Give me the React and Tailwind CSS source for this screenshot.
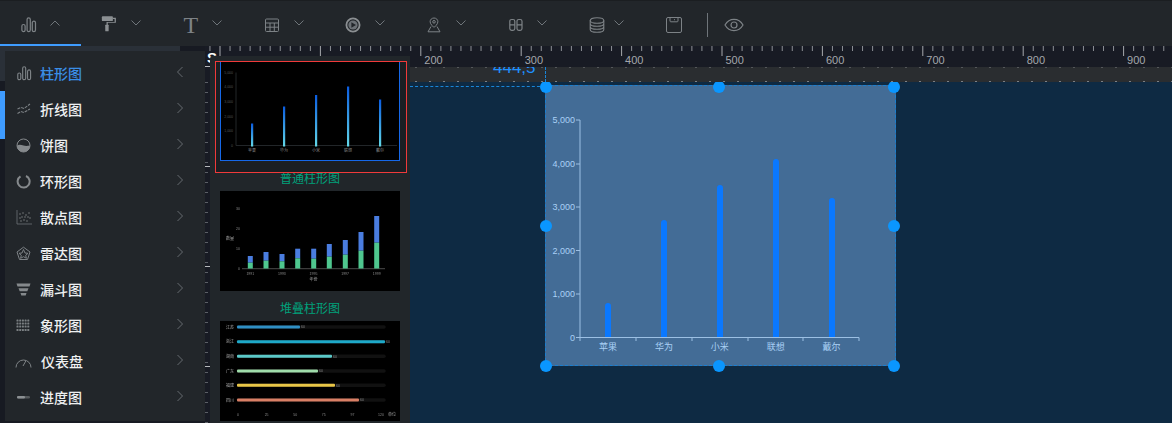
import React from "react";

const CJK = { fontFamily: '"Noto Sans CJK SC", "Liberation Sans", sans-serif' };
const G = "#7d8286";

const Ico = ({ size = 24, vb = 24, children, sw = 1.3, className = "" }) => (
  <svg width={size} height={size} viewBox={`0 0 ${vb} ${vb}`} fill="none" stroke={G} strokeWidth={sw} className={className}>
    {children}
  </svg>
);

const Chev = ({ up }) => (
  <svg width="12" height="8" viewBox="0 0 12 8" fill="none" stroke="#6f757a" strokeWidth="1" className="-mt-[4px]">
    <path d={up ? "M1.5 6.5 6 2l4.5 4.5" : "M1.5 1.5 6 6l4.5-4.5"} />
  </svg>
);

const BarsIco = ({ size = 18 }) => (
  <Ico size={size} vb={18}>
    <rect x="2" y="9" width="3.4" height="7.5" rx="1.7" />
    <rect x="7.5" y="2" width="3.4" height="14.5" rx="1.7" />
    <rect x="13" y="5.5" width="3.4" height="11" rx="1.7" />
  </Ico>
);

const ToolIcons = {
  bars: <BarsIco size={17} />,
  roller: (
    <svg width="20" height="20" viewBox="0 0 20 20" fill="#8b8f92" className="-mt-[2px]">
      <rect x="1" y="1" width="13" height="5.5" rx="1" />
      <path d="M14 2.5h3.5v6H8v3H6.5V7.5h9.5V4H14z" />
      <rect x="5" y="11" width="4" height="7.5" rx="0.6" />
    </svg>
  ),
  text: (
    <span className="text-[24px] leading-none text-[#7d8286]" style={{ fontFamily: '"Liberation Serif", serif' }}>T</span>
  ),
  table: (
    <Ico size={16} vb={16} sw={1}>
      <rect x="1.5" y="2" width="13" height="12.5" rx="1" />
      <path d="M1.5 6h13M1.5 10.2h13M6 6v8.5M10.3 6v8.5" />
    </Ico>
  ),
  play: (
    <svg width="16" height="16" viewBox="0 0 16 16">
      <circle cx="8" cy="8" r="6.6" fill="none" stroke="#8b8f92" strokeWidth="1.8" />
      <circle cx="8" cy="8" r="4.6" fill="#6c7176" />
      <path d="M6.4 5.2 11 8l-4.6 2.8z" fill="#22262a" />
    </svg>
  ),
  pin: (
    <Ico size={16} vb={16} sw={1}>
      <path d="M8 1c2.3 0 3.9 1.7 3.9 3.8C11.900 7.300 8 10.500 8 10.500S4.100 7.300 4.100 4.800C4.100 2.700 5.700 1 8 1z" />
      <circle cx="8" cy="4.800" r="1.300" />
      <path d="M5 9.500 2 14.800h12L11 9.500" />
    </Ico>
  ),
  grid: (
    <Ico size={14} vb={14} sw={1.2}>
      <rect x="0.800" y="1.500" width="5" height="10.800" rx="1.800" />
      <rect x="8" y="1.500" width="5" height="10.800" rx="1.800" />
      <path d="M0.800 6.900h5M8 6.900h5" />
    </Ico>
  ),
  db: (
    <Ico size={16} vb={16} sw={1.100}>
      <ellipse cx="8" cy="3.500" rx="6.800" ry="2.800" />
      <path d="M1.200 3.500v9c0 1.500 3 2.800 6.800 2.800s6.800-1.300 6.800-2.800v-9M1.200 6.500c0 1.500 3 2.800 6.800 2.800s6.800-1.300 6.800-2.800M1.200 9.500c0 1.500 3 2.800 6.800 2.800s6.800-1.300 6.800-2.800" />
    </Ico>
  ),
  save: (
    <Ico size={16} vb={16} sw={1}>
      <rect x="0.500" y="0.500" width="15" height="15" rx="1.500" />
      <path d="M4 0.500v3.500c0 .5.300.8.800.8h6.400c.5 0 .8-.3.800-.8V0.500M8.500 2.200v1" />
    </Ico>
  ),
  eye: (
    <Ico size={20} vb={20} sw={1.200}>
      <path d="M1 10c2.200-3.800 5.300-5.600 9-5.600s6.800 1.800 9 5.600c-2.200 3.800-5.300 5.600-9 5.600S3.200 13.800 1 10z" />
      <circle cx="10" cy="10" r="3" />
    </Ico>
  ),
};

const toolItems = ["bars", "roller", "text", "table", "play", "pin", "grid", "db"];

function Toolbar() {
  return (
    <div className="flex h-[46px] shrink-0 items-center border-t border-[#1b1e21] bg-[#22262a]">
      {toolItems.map((k, i) => (
        <div key={k} className={`flex h-full w-[81.200px] items-center pl-[20px] pt-[4px] ${i === 7 ? "gap-[8px]" : "gap-[12px]"} ${i === 0 ? "border-b-2 border-[#3f9cff]" : "border-b-2 border-transparent"}`}>
          <span className="flex w-[17px] items-center justify-center">{ToolIcons[k]}</span>
          <Chev up={i === 0} />
        </div>
      ))}
      <span className="ml-[16px] mt-[3px] flex w-[16px] items-center justify-center">{ToolIcons.save}</span>
      <span className="ml-[25px] mt-[3px] h-[24px] w-px bg-[#6f757a]" />
      <span className="ml-[16px] mt-[3px] flex w-[20px] items-center justify-center">{ToolIcons.eye}</span>
    </div>
  );
}

const sideIcons = [
  <BarsIco size={16} />,
  <Ico size={16} vb={16} sw={1.100}>
    <path d="M1.500 8 5 6.500 8 7.500 14 3M1.500 12.500 5 10.500 8 11.500 14 8" strokeDasharray="3 1" />
  </Ico>,
  <svg width="15" height="15" viewBox="0 0 15 15">
    <circle cx="7.500" cy="7.500" r="6.500" fill="none" stroke="#85898c" strokeWidth="1" />
    <path d="M1 7.500c2-1.200 4-.8 6.500 0s4.500.3 6.500 0c0 3.600-2.900 6.500-6.500 6.500S1 11.100 1 7.500z" fill="#85898c" />
  </svg>,
  <svg width="15" height="15" viewBox="0 0 15 15" fill="none" stroke="#85898c" strokeWidth="2">
    <path d="M10 2a6 6 0 1 1-5.500 0.400" />
  </svg>,
  <svg width="16" height="16" viewBox="0 0 16 16" fill="#85898c">
    <path d="M1 1v14h15" fill="none" stroke="#6d7276" strokeWidth="0.800" />
    {[[4, 5], [7, 4], [10, 6], [13, 4], [4, 9], [6, 8], [9, 8], [12, 8], [14, 9], [5, 12], [8, 11], [11, 12]].map(([x, y], i) => (
      <circle key={i} cx={x} cy={y} r="0.700" />
    ))}
  </svg>,
  <Ico size={15} vb={15} sw={1}>
    <path d="M7.500 1.200 14 6l-2.500 7.500h-8L1 6z" />
    <path d="M7.500 3.500 9 7l3 .3-2.300 2 .7 3-2.900-1.600-2.900 1.600.7-3L3 7.300 6 7z" />
  </Ico>,
  <svg width="15" height="13" viewBox="0 0 15 13" fill="#85898c">
    <path d="M0.500 0.500h14l-1 3H1.500zM2.500 5.200h10l-1.200 3H3.700zM4.500 10h6l-.8 2.500H5.300z" />
  </svg>,
  <svg width="15" height="13" viewBox="0 0 15 13" fill="#7b8083">
    {[0, 3, 6, 9.500].flatMap((y) =>
      [0.500, 3.200, 5.900, 8.600, 11.300].map((x) => <rect key={`${x}-${y}`} x={x} y={y + 0.500} width="2" height="2" rx="0.600" />)
    )}
  </svg>,
  <svg width="17" height="13" viewBox="0 0 17 13" fill="none" stroke="#7f8487" strokeWidth="1">
    <path d="M1 12.500A7.500 7.500 0 0 1 16 12.500M8 11l2.800-5" />
  </svg>,
  <svg width="14" height="5" viewBox="0 0 14 5">
    <rect x="0" y="1" width="13" height="2.600" rx="1.300" fill="#55595c" />
    <rect x="0" y="1" width="8" height="2.600" rx="1.300" fill="#8c9093" />
  </svg>,
];
const sideLabels = ["柱形图", "折线图", "饼图", "环形图", "散点图", "雷达图", "漏斗图", "象形图", "仪表盘", "进度图"];

function SideMenu() {
  return (
    <div className="h-[370px] w-[200px] bg-[#22262a] pt-[5px]" style={CJK}>
      {sideLabels.map((t, i) => (
        <div key={t} className="-mt-px mb-px flex h-[36px] items-center pl-[10px] pr-[21px]">
          <span className="flex w-[17px] items-center justify-center">{sideIcons[i]}</span>
          <span className={`${i === 8 ? "ml-[9px]" : "ml-[8px]"} flex-1 text-[14px] font-medium ${i === 0 ? "text-[#3a8ee6]" : "text-[#eef0f1]"}`}>{t}</span>
          <svg width="8" height="12" viewBox="0 0 8 12" fill="none" stroke="#666b70" strokeWidth="1" className="-mt-[3px]">
            <path d={i === 0 ? "M6.500 1 1.500 6l5 5" : "M1.500 1l5 5-5 5"} />
          </svg>
        </div>
      ))}
    </div>
  );
}

function Ruler() {
  const ticks = [];
  for (let i = -1; i < 96; i++) {
    const x = 15 + i * 10.04;
    const major = i >= 0 && i % 10 === 0;
    ticks.push(<line key={i} x1={x} x2={x} y1="0" y2={major ? 10 : 5} stroke={major ? "#a6a9ad" : "#8d9095"} strokeWidth="1" />);
  }
  const labels = [];
  for (let n = 2; n <= 9; n++) {
    labels.push(
      <text key={n} x={15 + n * 100.4 + 3.500} y="17.500" fontSize="11" fill="#a4a7ab" fontFamily="Liberation Sans, sans-serif">{n * 100}</text>
    );
  }
  return (
    <svg width="967" height="21" className="block h-[21px] shrink-0 bg-[#181b24]">
      {ticks}
      {labels}
    </svg>
  );
}

function Thumb1() {
  const bars = [[252, 123], [284, 106], [316, 94.500], [348, 86], [380, 99]];
  return (
    <svg viewBox="221 61 178 98" className="block h-full w-full">
      <defs>
        <linearGradient id="g1" x1="0" y1="0" x2="0" y2="1">
          <stop offset="0" stopColor="#0a5ce0" />
          <stop offset="1" stopColor="#63d8e8" />
        </linearGradient>
      </defs>
      <rect x="220" y="60" width="180" height="100" fill="#000" />
      <path d="M236 72v73h161" stroke="#222629" fill="none" strokeWidth="1" />
      {["5,000", "4,000", "3,000", "2,000", "1,000", "0"].map((t, i) => (
        <text key={t} x="233" y={73 + i * 14.700} textAnchor="end" fontSize="3.500" fill="#555" fontFamily="Liberation Sans">{t}</text>
      ))}
      {bars.map(([x, y]) => (
        <rect key={x} x={x - 1} y={y} width="2.200" height={146 - y} fill="url(#g1)" />
      ))}
      {["苹果", "华为", "小米", "联想", "戴尔"].map((t, i) => (
        <text key={t} x={252 + i * 32} y="151" textAnchor="middle" fontSize="4" fill="#888" style={CJK}>{t}</text>
      ))}
    </svg>
  );
}

function Thumb2() {
  const xs = [250.300, 266, 282, 297.700, 313.700, 329.300, 345.300, 361, 376.700];
  const tops = [256, 252, 254, 248.700, 248.700, 244, 240, 232, 216];
  const mids = [262.700, 260.700, 261.300, 258.300, 258.700, 256.700, 254.700, 250.700, 242.700];
  return (
    <svg viewBox="220 191 180 100" className="block h-full w-full blur-[0.4px]">
      <rect x="220" y="191" width="180" height="100" fill="#000" />
      <line x1="242" x2="385" y1="268.700" y2="268.700" stroke="#4a4a4a" strokeWidth="1" />
      {xs.map((x, i) => (
        <g key={x}>
          <rect x={x - 2.500} y={tops[i]} width="5" height={mids[i] - tops[i]} fill="#4a7de0" />
          <rect x={x - 2.500} y={mids[i]} width="5" height={268.500 - mids[i]} fill="#4fc78f" />
        </g>
      ))}
      {[["30", 210], ["20", 230], ["10", 250], ["0", 270]].map(([t, y]) => (
        <text key={t} x="240" y={y} textAnchor="end" fontSize="3.500" fill="#888" fontFamily="Liberation Sans">{t}</text>
      ))}
      <text x="230" y="240" textAnchor="middle" fontSize="4" fill="#aaa" style={CJK}>数量</text>
      {["1991", "1993", "1995", "1997", "1999"].map((t, i) => (
        <text key={t} x={250.300 + i * 31.600} y="275" textAnchor="middle" fontSize="3.500" fill="#888" fontFamily="Liberation Sans">{t}</text>
      ))}
      <text x="313.500" y="281" textAnchor="middle" fontSize="4" fill="#aaa" style={CJK}>年份</text>
    </svg>
  );
}

function Thumb3() {
  const rows = [
    ["江苏", 327, 300, "#2f8fc4"],
    ["浙江", 341.700, 385, "#1ea9c9"],
    ["湖南", 356.300, 332, "#5bc9c9"],
    ["广东", 371, 318, "#9fdcaa"],
    ["福建", 385.300, 335, "#e8c547"],
    ["四川", 400, 359, "#d97f65"],
  ];
  return (
    <svg viewBox="220 321 180 100" className="block h-full w-full blur-[0.3px]">
      <rect x="220" y="321" width="180" height="100" fill="#000" />
      {rows.map(([t, y, e, c]) => (
        <g key={t}>
          <rect x="237" y={y - 1.700} width="148.700" height="3.400" rx="1.700" fill="#111" />
          <rect x="237" y={y - 1.500} width={e - 237} height="3" rx="1" fill={c} />
          <text x="234" y={y + 1.500} textAnchor="end" fontSize="4" fill="#aaa" style={CJK}>{t}</text>
          <text x={e + 1} y={y + 1.300} fontSize="3.500" fill="#888" fontFamily="Liberation Sans">60</text>
        </g>
      ))}
      {["0", "25", "50", "75", "97", "120"].map((t, i) => (
        <text key={t} x={238 + i * 28.600} y="415.500" textAnchor="middle" fontSize="3.500" fill="#888" fontFamily="Liberation Sans">{t}</text>
      ))}
      <text x="392" y="415.500" textAnchor="middle" fontSize="4" fill="#999" style={CJK}>单位</text>
    </svg>
  );
}

function TemplatePanel() {
  return (
    <div className="absolute left-[210px] top-[10px] flex h-[367px] w-[200px] flex-col rounded-tl-[3px] bg-[#21262a] px-[10px] pt-[5px]" style={CJK}>
      <div className="relative -ml-[5px] -mr-[7px] h-[112px] shrink-0 bg-[#1b1f23]">
        <div className="absolute inset-0 z-10 border border-[#f03a3a]" />
        <div className="absolute left-[5px] top-0 h-[100px] w-[180px] border-x border-b border-[#1668e8]">
          <Thumb1 />
        </div>
      </div>
      <div className="h-[18px] shrink-0 text-center text-[12px] leading-[10px] text-[#00a27c]">普通柱形图</div>
      <div className="h-[100px] shrink-0"><Thumb2 /></div>
      <div className="h-[30px] shrink-0 pt-[10px] text-center text-[12px] leading-[14px] text-[#00a27c]">堆叠柱形图</div>
      <div className="h-[100px] shrink-0"><Thumb3 /></div>
    </div>
  );
}

const Handle = ({ cls }) => <span className={`absolute h-[12px] w-[12px] -translate-x-1/2 -translate-y-1/2 rounded-full bg-[#0a96ff] ${cls}`} />;

function Chart() {
  const yt = [["5,000", 120], ["4,000", 164], ["3,000", 207], ["2,000", 250.500], ["1,000", 294], ["0", 337.500]];
  const bars = [[608, 303], [664, 220], [720, 185], [776, 159], [832, 198]];
  const xt = [580, 636, 692, 748, 803, 859];
  const names = ["苹果", "华为", "小米", "联想", "戴尔"];
  return (
    <svg viewBox="546 86 349 279" className="block h-full w-full">
      <path d="M580 120v217.500H859" fill="none" stroke="#9cc0e4" strokeWidth="1" />
      {yt.map(([t, y]) => (
        <g key={t}>
          <line x1="576" x2="580" y1={y} y2={y} stroke="#9cc0e4" />
          <text x="575" y={y + 3.200} textAnchor="end" fontSize="9" fill="#a9d0f5" fontFamily="Liberation Sans, sans-serif">{t}</text>
        </g>
      ))}
      {xt.map((x) => <line key={x} x1={x} x2={x} y1="337.500" y2="341" stroke="#9cc0e4" />)}
      {bars.map(([x, y]) => (
        <path key={x} d={`M${x - 3} 337V${y + 3}a3 3 0 0 1 6 0V337z`} fill="#0a78ff" />
      ))}
      {names.map((t, i) => (
        <text key={t} x={608 + i * 55.900} y="350" textAnchor="middle" fontSize="9" fill="#a9d0f5" style={CJK}>{t}</text>
      ))}
    </svg>
  );
}

function Canvas() {
  return (
    <div className="relative flex-1 overflow-hidden bg-[#0e2a43]">
      <div className="absolute left-0 top-[4px] h-0 w-[135px] border-t border-dashed border-[#1a86d8]" />
      <div className="absolute left-[135px] top-[3px] h-[281px] w-[351px] border border-dashed border-[#1a7fd0] bg-[#436c96]">
        <Chart />
      </div>
      <Handle cls="left-[136px] top-[5px]" />
      <Handle cls="left-[309px] top-[5px]" />
      <Handle cls="left-[484px] top-[5px]" />
      <Handle cls="left-[136px] top-[144px]" />
      <Handle cls="left-[484px] top-[144px]" />
      <Handle cls="left-[136px] top-[284px]" />
      <Handle cls="left-[309px] top-[284px]" />
      <Handle cls="left-[484px] top-[284px]" />
    </div>
  );
}

const dots = {
  backgroundImage:
    "repeating-linear-gradient(90deg,#7c8084 0 2px,transparent 2px 14px),repeating-linear-gradient(90deg,#55585b 0 2px,transparent 2px 14px)",
  backgroundSize: "100% 1px,100% 1px",
  backgroundPosition: "0 14px,0 0",
  backgroundRepeat: "no-repeat",
};

const vDots = {
  backgroundImage: "repeating-linear-gradient(180deg,#5b5f66 0 1px,transparent 1px 10px)",
  backgroundSize: "3px 100%",
  backgroundRepeat: "no-repeat",
};

export default function App() {
  return (
    <div className="relative flex h-[423px] w-[1172px] flex-col overflow-hidden bg-[#181b24]" style={{ fontFamily: '"Liberation Sans", sans-serif' }}>
      <Toolbar />
      <div className="relative flex min-h-0 flex-1">
        <div className="relative flex w-[205px] shrink-0 flex-col bg-[#171a22]">
          <div className="h-[5px] w-[180px] bg-[#2a3038]" />
          <div className="flex">
            <div className="w-[5px] shrink-0">
              <div className="h-[30px] bg-[#2a3038]" />
              <div className="h-[10px]" />
              <div className="h-[48px] bg-[#3f9cff]" />
            </div>
            <SideMenu />
          </div>
        </div>
        <div className="relative flex min-w-0 flex-1 flex-col">
          <Ruler />
          <div className="relative h-[15px] shrink-0 overflow-hidden bg-[#2a2d30]" style={dots}>
            <span className="absolute left-[288px] -top-[9px] text-[17px] leading-[20px] text-[#1e90ff]">444,5</span>
            <span className="absolute left-[340px] top-0 h-full border-l border-dashed border-[#1a86d8]" />
            <span className="absolute left-0 top-0 h-full w-[5px] bg-[#181b24]" />
          </div>
          <div className="flex min-h-0 flex-1">
            <div className="relative w-[5px] shrink-0" style={vDots}>
              <span className="absolute left-0 top-[84px] h-px w-[5px] bg-[#b8babd]" />
              <span className="absolute left-0 top-[184px] h-px w-[5px] bg-[#b8babd]" />
              <span className="absolute left-0 top-[284px] h-px w-[5px] bg-[#b8babd]" />
            </div>
            <div className="w-[200px] shrink-0" />
            <Canvas />
          </div>
          <span className="absolute left-0 top-[20px] z-10 h-px w-[5px] bg-[#b8babd]" />
          <span className="absolute left-[2px] top-[4px] text-[15px] font-bold leading-none text-white">S</span>
        </div>
        <TemplatePanel />
      </div>
    </div>
  );
}
